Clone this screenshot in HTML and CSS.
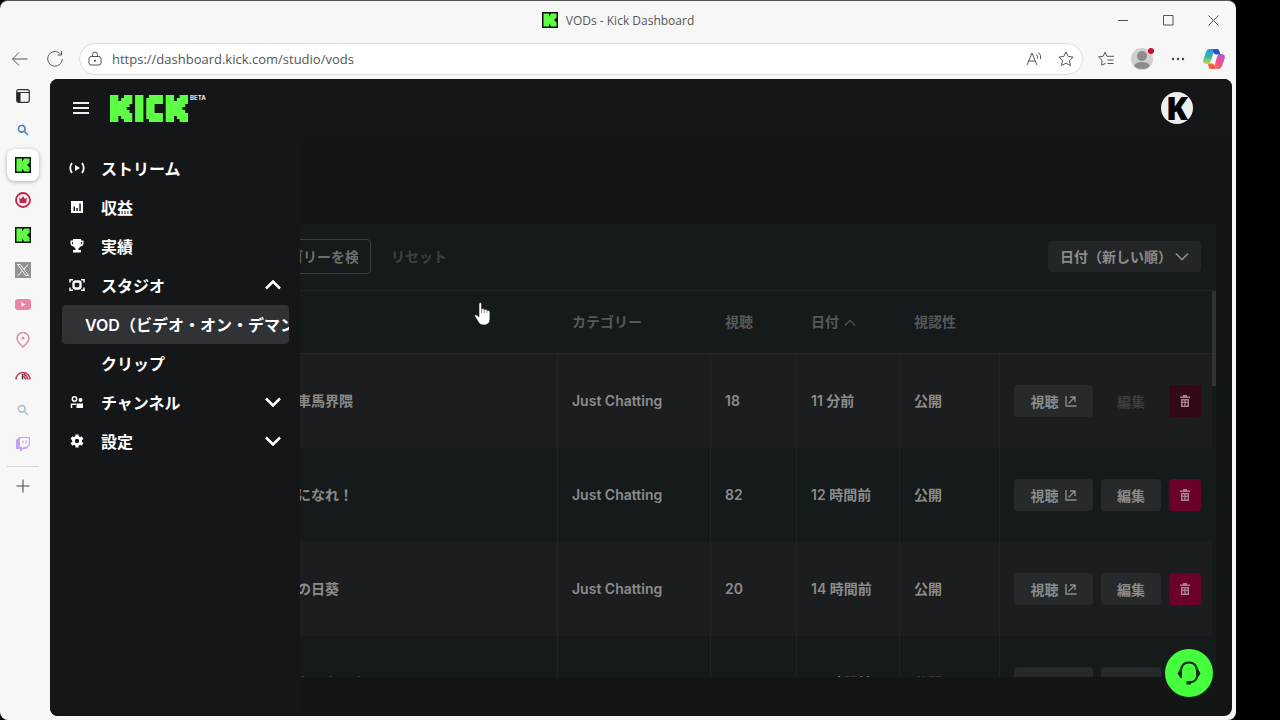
FILE: index.html
```html
<!DOCTYPE html>
<html lang="ja">
<head>
  <meta charset="utf-8">
  <meta name="viewport" content="width=device-width, initial-scale=1">
  <title>VODs - Kick Dashboard</title>
  <link rel="stylesheet" href="styles.css">
</head>
<body>
  <svg class="defs" width="0" height="0" aria-hidden="true">
    <symbol id="kick-k" viewBox="0 0 16 16">
      <path fill="#0b160a" d="M0 0h16v16H0z"/>
      <path fill="#5dff45" d="M1.500 1.500h5.500V4h1V2.500h1v-1h5.500V6h-1v1h-1v2h1v1h1v4.500H9v-1H8V12H7v2.500H1.500z"/>
    </symbol>
    <symbol id="magnifier" viewBox="0 0 12 12">
      <path fill="none" stroke="currentColor" stroke-width="1.600" d="M8 4.800a3.300 3.300 0 1 1-6.600 0 3.300 3.300 0 0 1 6.600 0M7.300 7.300 11 11"/>
    </symbol>
    <symbol id="chevron" viewBox="0 0 16 10">
      <path fill="none" stroke="currentColor" stroke-width="2.500" d="m1 1.500 7 7 7-7"/>
    </symbol>
    <symbol id="chevron-thin" viewBox="0 0 16 10">
      <path fill="none" stroke="currentColor" stroke-width="1.800" d="m1 1.500 7 7 7-7"/>
    </symbol>
    <symbol id="open-link" viewBox="0 0 12 12">
      <path fill="none" stroke="currentColor" stroke-width="1.400" d="M1 1v10h10.500M3.500 8.500l6-6M5 2h5v5"/>
    </symbol>
    <symbol id="trash" viewBox="0 0 10 12">
      <path fill="currentColor" d="M3 0h4v1.500h3V3H0V1.500h3zM1 4h8v8H1zm1.500 1.500v1.200h1.800V5.500zm3.200 0v1.200h1.800V5.500zM2.500 8v2.600h1.800V8zm3.200 0v2.600h1.800V8z" fill-rule="evenodd"/>
    </symbol>
  </svg>

  <div class="window">
    <header class="titlebar">
      <div class="window-title">
        <svg width="16" height="16"><use href="#kick-k"/></svg>
        <span>VODs - Kick Dashboard</span>
      </div>
      <div class="window-controls">
        <button aria-label="最小化"><svg width="11" height="11" viewBox="0 0 11 11"><path d="M0 5.500h10"/></svg></button>
        <button aria-label="最大化"><svg width="11" height="11" viewBox="0 0 11 11"><path d="M.5.500h9.500V10H.500z"/></svg></button>
        <button aria-label="閉じる"><svg width="11" height="11" viewBox="0 0 11 11"><path d="m.5.500 10 10m0-10-10 10"/></svg></button>
      </div>
    </header>

    <div class="toolbar">
      <button class="tool" aria-label="戻る"><svg width="18" height="16" viewBox="0 0 18 16"><path d="M8 1.500 1.500 8 8 14.500M1.500 8H16.500"/></svg></button>
      <button class="tool" aria-label="更新"><svg width="18" height="18" viewBox="0 0 18 18"><path d="M15 4.700A7.300 7.300 0 1 0 16.300 9M15.500 1v4h-4"/></svg></button>
      <div class="address">
        <svg width="14" height="16" viewBox="0 0 14 16"><path d="M3 5.500h8q2 0 2 2V12q0 2-2 2H3q-2 0-2-2V7.500q0-2 2-2M4.500 5.500V3.500a2.500 2.500 0 0 1 5 0v2"/><circle class="dot" cx="7" cy="9.700" r="1"/></svg>
        <input type="text" aria-label="アドレス" value="https://dashboard.kick.com/studio/vods">
        <button class="tool" aria-label="音声で読み上げる"><svg width="16" height="16" viewBox="0 0 16 16"><path d="m1 14 5-12 5 12M2.700 10h6.600M10.500 3.500q1.500 1.500 1 4M12.500 1.500q3 2.500 2 6.500"/></svg></button>
        <button class="tool" aria-label="お気に入りに追加"><svg width="16" height="16" viewBox="0 0 16 16"><path d="m8 .9 2.200 4.500 4.900.7-3.500 3.500.8 4.900L8 12.200l-4.400 2.300.8-4.900L.900 6.100l4.900-.7z"/></svg></button>
      </div>
      <div class="tools">
        <button class="tool" aria-label="お気に入り"><svg width="18" height="16" viewBox="0 0 18 16"><path d="M4.500 14.200 5.200 9.500 1.500 6l4.700-.7L8 1.200l2 4.100h7M5 14.200l3.500-2M10.500 9h6M10.500 12.500h6"/></svg></button>
        <button class="tool profile" aria-label="プロファイル">
          <svg class="filled" width="22" height="22" viewBox="0 0 22 22"><circle cx="11" cy="11" r="11" fill="#cfcfcf"/><circle cx="11" cy="8" r="5" fill="#8c8c8c"/><ellipse cx="11" cy="17.500" rx="7.500" ry="3.500" fill="#8c8c8c"/></svg>
          <span class="alert-dot"></span>
        </button>
        <button class="tool" aria-label="設定など"><svg width="14" height="4" viewBox="0 0 14 4"><g class="dot"><circle cx="2" cy="2" r="1.200"/><circle cx="7" cy="2" r="1.200"/><circle cx="12" cy="2" r="1.200"/></g></svg></button>
        <button class="tool" aria-label="Copilot">
          <svg class="filled" width="22" height="20" viewBox="0 0 22 20">
            <defs>
              <linearGradient id="cop-a" x1="0" y1="0" x2="0" y2="1"><stop offset="0" stop-color="#2f8fe6"/><stop offset=".5" stop-color="#35b8a8"/><stop offset="1" stop-color="#d7d53a"/></linearGradient>
              <linearGradient id="cop-b" x1="1" y1="0" x2="0" y2="1"><stop offset="0" stop-color="#a65be8"/><stop offset=".5" stop-color="#ee4f8c"/><stop offset="1" stop-color="#f59a3c"/></linearGradient>
            </defs>
            <path fill="url(#cop-a)" d="M6 0h8q-3 1-4 5l-2 7q-1 3-3 3H3q-4-1-2.500-5L3 3q1-3 3-3"/>
            <path fill="#2350c8" d="M10 0h4q2 0 3 4l.500 1.500H13Q10 5 10 0"/>
            <path fill="url(#cop-b)" d="M16 20H8q3-1 4-5l2-7q1-3 3-3h2q4 1 2.500 5L19 17q-1 3-3 3"/>
            <path fill="#f0603c" d="M12 20H8q-2 0-2.500-3L5 14.500h4.500q2.500 1 2.500 5.500"/>
          </svg>
        </button>
      </div>
    </div>

    <div class="browser-body">
      <nav class="tab-strip" aria-label="タブ">
        <a class="tab-actions" href="#" aria-label="タブ操作"><svg width="14" height="14" viewBox="0 0 14 14"><rect x=".7" y=".7" width="12.600" height="12.600" rx="2" fill="none" stroke="#333" stroke-width="1.200"/><path fill="#222" d="M1 3h3.500v10H2q-1-.500-1-2z"/><path stroke="#333" d="M1 3.500h12"/></svg></a>
        <a class="search-blue" href="#" aria-label="検索"><svg width="12" height="12"><use href="#magnifier"/></svg></a>
        <a class="current" href="#" aria-label="Kick"><svg width="16" height="16"><use href="#kick-k"/></svg></a>
        <a href="#" aria-label="クラウン"><svg width="16" height="16" viewBox="0 0 16 16"><circle cx="8" cy="8" r="7" fill="none" stroke="#c8234a" stroke-width="1.800"/><path fill="#c8234a" d="m4 5.500 2 1.500 2-3 2 3 2-1.500-.8 5.500H4.800z"/></svg></a>
        <a href="#" aria-label="Kick"><svg width="16" height="16"><use href="#kick-k"/></svg></a>
        <a href="#" aria-label="X"><svg width="16" height="16" viewBox="0 0 16 16"><path fill="#929292" d="M0 0h16v16H0z"/><path fill="none" stroke="#fff" d="M2.500 2.500h2.800l8.200 11h-2.800zM13 2.500 9 7M7 9.200l-4 4.300"/></svg></a>
        <a href="#" aria-label="YouTube"><svg width="16" height="12" viewBox="0 0 16 12"><rect width="16" height="11" rx="3" fill="#ea86a7"/><path fill="#fff" d="m6.500 3.500 4 2-4 2z"/></svg></a>
        <a href="#" aria-label="地図"><svg width="14" height="16" viewBox="0 0 14 16"><path fill="none" stroke="#d9909f" stroke-width="1.500" d="M7 15Q1 9.500 1 6.500a6 6 0 0 1 12 0Q13 9.500 7 15z"/><circle cx="7" cy="6" r="1.500" fill="#d9909f"/></svg></a>
        <a href="#" aria-label="速度計"><svg width="16" height="10" viewBox="0 0 16 10"><path fill="none" stroke="#c43a5a" stroke-width="1.500" d="M1 9.500a7 7 0 0 1 14 0M8.500 4q3.500 1.500 4.500 5.500M8.500 6l2.500 3.500"/><path stroke="#444" stroke-width="1.500" d="M7.500 4v5.500"/></svg></a>
        <a class="search-pale" href="#" aria-label="検索"><svg width="12" height="12"><use href="#magnifier"/></svg></a>
        <a href="#" aria-label="Twitch"><svg width="16" height="16" viewBox="0 0 16 16"><path fill="#c3a4f0" d="M4 0h11v8l-4 4H8l-3 3.500V12H1V3z"/><path fill="#fff" d="M5 1.300h8.700v6.200L11.500 9.700H9L7 11.500V9.700H5z"/><path stroke="#c3a4f0" stroke-width="1.300" d="M8 3.500v3M11 3.500v3"/></svg></a>
        <hr>
        <button aria-label="新しいタブ"><svg width="14" height="14" viewBox="0 0 14 14"><path stroke="#444" d="M7 .5v13M.5 7h13"/></svg></button>
      </nav>

      <div class="app">
        <header class="app-header">
          <button class="menu-button" aria-label="メニュー"><span></span><span></span><span></span></button>
          <a class="logo" href="#" aria-label="Kick">
            <svg width="78" height="27" viewBox="0 0 28 9" preserveAspectRatio="none">
              <path fill="#5dff45" d="M0 0h3v2h1V1h1V0h3v3H7v1H6v1h1v1h1v3H5V8H4V7H3v2H0zM9 0h3v9H9zM14 0h5v3h-3v3h3v3h-5V8h-1V1h1zM20 0h3v2h1V1h1V0h3v3h-1v1h-1v1h1v1h1v3h-3V8h-1V7h-1v2h-3z"/>
            </svg>
            <span>BETA</span>
          </a>
          <button class="avatar" aria-label="アカウント">K</button>
        </header>

        <nav class="drawer">
          <a href="#">
            <svg width="16" height="12" viewBox="0 0 16 12"><path fill="none" stroke="currentColor" stroke-width="1.800" d="M3 1Q-.5 6 3 11M13 1q3.500 5 0 10"/><path fill="currentColor" d="m6 3 5 3-5 3z"/></svg>
            <span>ストリーム</span>
          </a>
          <a href="#">
            <svg width="16" height="12" viewBox="0 0 16 12"><path fill="currentColor" fill-rule="evenodd" d="M2 0h12v12H2zm2.500 5.500V10H6V5.500zM7.300 7v3h1.500V7zM10.300 2.500V10h1.500V2.500z"/></svg>
            <span>収益</span>
          </a>
          <a href="#">
            <svg width="16" height="14" viewBox="0 0 16 14"><path fill="currentColor" fill-rule="evenodd" d="M4 0h8v1.500h2.500V4q0 3-3 3.500L9.500 9.500V11H12v2.500H4V11h2.500V9.500l-2-2q-3-.5-3-3.500V1.500H4zM2.800 3q0 2 1.200 2.700V3zm9.200 0v2.700q1.200-.700 1.200-2.700z"/></svg>
            <span>実績</span>
          </a>
          <a href="#">
            <svg width="16" height="12" viewBox="0 0 16 12"><path fill="none" stroke="currentColor" stroke-width="1.500" d="M1 3.500V.800h3M12 .800h3v2.700M1 8.500v2.700h3M12 11.200h3V8.500"/><rect x="4.500" y="2.500" width="7" height="7" rx="2" fill="none" stroke="currentColor" stroke-width="2.400"/></svg>
            <span>スタジオ</span>
            <svg class="arrow up" width="16" height="10"><use href="#chevron"/></svg>
          </a>
          <a class="sub selected" href="#"><span>VOD（ビデオ・オン・デマンド）</span></a>
          <a class="sub" href="#"><span>クリップ</span></a>
          <a href="#">
            <svg width="16" height="12" viewBox="0 0 16 12"><circle cx="5.500" cy="3" r="2.200" fill="none" stroke="currentColor" stroke-width="1.500"/><path fill="none" stroke="currentColor" stroke-width="1.500" d="M2.500 12V8.200H7"/><circle cx="11.500" cy="4" r="2" fill="currentColor"/><path fill="currentColor" d="M7.500 7.500H14V12H7.500z"/></svg>
            <span>チャンネル</span>
            <svg class="arrow" width="16" height="10"><use href="#chevron"/></svg>
          </a>
          <a href="#">
            <svg width="16" height="14" viewBox="0 0 16 14"><circle cx="8" cy="7" r="3.500" fill="none" stroke="currentColor" stroke-width="3"/><path stroke="currentColor" stroke-width="3.200" d="M8 .500v3M8 10.500v3M2.400 3.700 5 5.300M11 8.700l2.600 1.600M13.600 3.700 11 5.300M5 8.700l-2.600 1.600"/><circle cx="8" cy="7" r="2" fill="#141617"/></svg>
            <span>設定</span>
            <svg class="arrow" width="16" height="10"><use href="#chevron"/></svg>
          </a>
        </nav>

        <main class="panel">
          <div class="filters">
            <input class="title-search" type="text" aria-label="タイトル">
            <input class="category-search" type="text" aria-label="カテゴリー" placeholder="カテゴリーを検索">
            <button class="reset">リセット</button>
            <div class="sort">
              <select aria-label="並べ替え"><option>日付（新しい順）</option></select>
              <svg width="14" height="9"><use href="#chevron-thin"/></svg>
            </div>
          </div>

          <div class="table-area">
            <table>
              <colgroup>
                <col class="col-thumb"><col><col class="col-category"><col class="col-views"><col class="col-date"><col class="col-visibility"><col class="col-actions">
              </colgroup>
              <thead>
                <tr>
                  <th></th><th></th><th>カテゴリー</th><th>視聴</th>
                  <th>日付 <svg class="up" width="12" height="8"><use href="#chevron-thin"/></svg></th>
                  <th>視認性</th><th></th>
                </tr>
              </thead>
              <tbody>
                <tr>
                  <td></td><td>車馬界隈</td><td>Just Chatting</td><td>18</td><td>11 分前</td><td>公開</td>
                  <td><div class="actions">
                    <button class="watch">視聴 <svg width="12" height="12"><use href="#open-link"/></svg></button>
                    <button class="edit" disabled>編集</button>
                    <button class="delete" aria-label="削除" disabled><svg width="10" height="12"><use href="#trash"/></svg></button>
                  </div></td>
                </tr>
                <tr>
                  <td></td><td>になれ！</td><td>Just Chatting</td><td>82</td><td>12 時間前</td><td>公開</td>
                  <td><div class="actions">
                    <button class="watch">視聴 <svg width="12" height="12"><use href="#open-link"/></svg></button>
                    <button class="edit">編集</button>
                    <button class="delete" aria-label="削除"><svg width="10" height="12"><use href="#trash"/></svg></button>
                  </div></td>
                </tr>
                <tr>
                  <td></td><td>の日葵</td><td>Just Chatting</td><td>20</td><td>14 時間前</td><td>公開</td>
                  <td><div class="actions">
                    <button class="watch">視聴 <svg width="12" height="12"><use href="#open-link"/></svg></button>
                    <button class="edit">編集</button>
                    <button class="delete" aria-label="削除"><svg width="10" height="12"><use href="#trash"/></svg></button>
                  </div></td>
                </tr>
                <tr>
                  <td></td><td>なになった</td><td>Just Chatting</td><td>20</td><td>16 時間前</td><td>公開</td>
                  <td><div class="actions">
                    <button class="watch">視聴 <svg width="12" height="12"><use href="#open-link"/></svg></button>
                    <button class="edit">編集</button>
                    <button class="delete" aria-label="削除"><svg width="10" height="12"><use href="#trash"/></svg></button>
                  </div></td>
                </tr>
              </tbody>
            </table>
            <div class="scrollbar"><div class="thumb"></div></div>
          </div>
        </main>

        <button class="support" aria-label="サポート">
          <svg width="24" height="24" viewBox="0 0 24 24"><path fill="none" stroke="#0c2a0c" stroke-width="2" d="M4 11V9.500Q4.500 1.500 12 1.500T20 9.500V15q0 6-8 6.500"/><path fill="#0c2a0c" d="M5 8v9H3.500L.500 12.500 3 8zM19 8v9h1.500l3-4.500L21 8zM9.500 20H14v3.500H9.500z"/></svg>
        </button>
      </div>
    </div>
  </div>

  <svg class="pointer" width="17" height="24" viewBox="0 0 17 24" aria-hidden="true">
    <path fill="#fff" stroke="#222" stroke-width=".6" d="M5 2q0-1.500 1.200-1.500T7.500 2v5q2-1 2.700.500 2-.8 2.700.800 3-.5 3 2V17q0 6-6.500 6-3.500 0-5-3L1 14.500q-.7-1.500.5-1.700T5 15z"/>
    <path stroke="#555" stroke-width=".6" d="M7.500 7v4M10.200 7.500V11M12.900 8.500V11"/>
  </svg>
</body>
</html>
```
FILE: styles.css
```css
* {
  box-sizing: border-box;
}
body {
  margin: 0;
  height: 100vh;
  padding-right: 44px;
  overflow: hidden;
  background: #000;
  font-family: Inter, "Noto Sans CJK JP", sans-serif;
  font-size: 14px;
}
button {
  display: flex;
  align-items: center;
  justify-content: center;
  padding: 0;
  border: 0;
  background: none;
  color: inherit;
  font: inherit;
}
svg {
  flex: none;
}
.defs {
  position: absolute;
}

/* browser window */
.window {
  display: flex;
  flex-direction: column;
  height: 100%;
  border-top: 1px solid #5a5658;
  border-radius: 8px;
  background: #f7f7f7;
  overflow: hidden;
  color: #555;
  font-family: "Open Sans", sans-serif;
}
.titlebar {
  display: grid;
  grid-template-columns: 1fr auto 1fr;
  align-items: center;
  height: 38px;
  flex: none;
}
.window-title {
  grid-column: 2;
  display: flex;
  align-items: center;
  gap: 8px;
  font-size: 12px;
}
.window-controls {
  display: flex;
  justify-content: flex-end;
}
.window-controls button {
  width: 45px;
}
.window-controls path,
.toolbar path {
  fill: none;
  stroke: #555;
}
.toolbar {
  display: flex;
  align-items: center;
  height: 40px;
  flex: none;
  padding: 0 5px 0 2px;
}
.toolbar .filled path {
  stroke: none;
  fill: revert-layer;
}
.dot {
  fill: #444;
}
.tool {
  width: 35px;
  height: 30px;
}
.address {
  display: flex;
  align-items: center;
  flex: 1;
  height: 32px;
  margin-left: 7px;
  padding: 0 0 0 8px;
  border: 1px solid #dcdcdc;
  border-radius: 16px;
  background: #fff;
}
.address input {
  flex: 1;
  min-width: 0;
  padding: 0 0 0 10px;
  border: 0;
  outline: 0;
  background: none;
  color: #555;
  font-family: inherit;
  font-size: 13px;
}
.address .tool {
  width: 32px;
}
.tools {
  display: flex;
  gap: 1px;
  margin-left: 5px;
}
.profile {
  position: relative;
}
.alert-dot {
  position: absolute;
  top: 4px;
  right: 5px;
  width: 6px;
  height: 6px;
  border-radius: 50%;
  background: #c8102e;
}
.browser-body {
  display: flex;
  flex: 1;
  min-height: 0;
  padding: 0 4px 4px 0;
}
.tab-strip {
  display: flex;
  flex-direction: column;
  align-items: center;
  width: 50px;
  padding-right: 4px;
  flex: none;
}
.tab-strip a {
  display: flex;
  align-items: center;
  justify-content: center;
  width: 32px;
  height: 35px;
  border-radius: 8px;
}
.tab-strip .tab-actions {
  height: 33px;
}
.tab-strip .current {
  height: 32px;
  margin: 2px 0 1px;
  background: #fff;
  box-shadow: 0 1px 4px rgba(0, 0, 0, .3);
}
.tab-strip hr {
  width: 32px;
  margin: 4px 0 12px;
  border: 0;
  border-top: 1px solid #d4d4d4;
}
.search-blue {
  color: #4a7fb8;
}
.search-pale {
  color: #a9bfd0;
}

/* dashboard */
.app {
  position: relative;
  display: flex;
  flex-direction: column;
  flex: 1;
  min-width: 0;
  border-radius: 8px;
  background: #141615;
  overflow: hidden;
  color: #8a8c8c;
  font-family: Inter, "Noto Sans CJK JP", sans-serif;
  font-weight: 600;
}
.app-header {
  display: flex;
  align-items: center;
  height: 58px;
  flex: none;
  padding: 0 39px 0 23px;
  background: #141617;
}
.menu-button {
  flex-direction: column;
  gap: 3px;
  width: 16px;
}
.menu-button span {
  width: 16px;
  height: 2px;
  background: #eee;
}
.logo {
  display: flex;
  margin-left: 21px;
  color: #ddd;
  text-decoration: none;
}
.logo span {
  margin-left: 2px;
  font-size: 6px;
  font-weight: 800;
  line-height: 6px;
}
.avatar {
  width: 32px;
  height: 32px;
  margin-left: auto;
  border-radius: 50%;
  background: #eee;
  color: #000;
  font-family: "Noto Sans", sans-serif;
  font-size: 32px;
  font-weight: 900;
  line-height: 32px;
}
.drawer {
  position: absolute;
  top: 58px;
  bottom: 0;
  left: 0;
  z-index: 1;
  width: 250px;
  padding: 12px 11px 0 12px;
  background: #141617;
}
.drawer a {
  display: flex;
  align-items: center;
  height: 39px;
  padding: 0 8px 2px 7px;
  border-radius: 4px;
  overflow: hidden;
  color: #fff;
  font-size: 16px;
  font-weight: 700;
  text-decoration: none;
  white-space: nowrap;
}
.drawer span {
  margin-left: 16px;
}
.drawer .sub {
  padding-left: 23px;
}
.drawer .selected {
  padding-left: 7px;
  background: #303236;
  font-weight: 600;
}
.arrow {
  margin-left: auto;
}
.up {
  transform: rotate(180deg);
}
.panel {
  display: flex;
  flex-direction: column;
  flex: 1;
  min-height: 0;
  margin: 87px 16px 39px;
  background: #151a1a;
}
.filters {
  display: flex;
  align-items: center;
  height: 67px;
  flex: none;
  padding: 0 15px 2px 16px;
  border-bottom: 1px solid #1f2525;
}
.filters input {
  height: 35px;
  margin-right: 8px;
  padding: 0 12px;
  border: 1px solid #3c3e3f;
  border-radius: 4px;
  background: none;
  color: #777;
  font: inherit;
}
.filters input::placeholder {
  color: #6c6e6f;
}
.title-search {
  width: 158px;
}
.category-search {
  width: 123px;
}
.reset {
  padding: 0 12px;
  color: #3e4142;
}
.sort {
  position: relative;
  margin-left: auto;
}
.sort select {
  width: 153px;
  height: 31px;
  padding: 0 12px;
  border: 0;
  border-radius: 4px;
  appearance: none;
  background: #232627;
  color: #8a8c8c;
  font: inherit;
}
.sort svg {
  position: absolute;
  top: 11px;
  right: 12px;
  pointer-events: none;
}
.table-area {
  display: flex;
  align-items: flex-start;
  flex: 1;
  min-height: 0;
  overflow: hidden;
}
table {
  flex: 1;
  min-width: 0;
  table-layout: fixed;
  border-collapse: separate;
  border-spacing: 0;
}
.col-thumb { width: 215px; }
.col-category { width: 153px; }
.col-views { width: 86px; }
.col-date { width: 103px; }
.col-visibility { width: 100px; }
.col-actions { width: 213px; }
th {
  height: 63px;
  padding: 0 15px 3px;
  border-bottom: 1px solid #252829;
  color: #55595a;
  font-weight: 600;
  text-align: left;
  white-space: nowrap;
}
th svg {
  margin-left: 1px;
}
td {
  height: 94px;
  padding: 0 0 2px 14px;
  border-left: 1px solid #202425;
  white-space: nowrap;
}
td:nth-child(-n+2) {
  padding-left: 16px;
  border-left: 0;
}
td:last-child {
  padding-bottom: 0;
}
tbody tr:nth-child(odd) {
  background: #1c1d1f;
}
.actions {
  display: flex;
  gap: 8px;
}
.actions button {
  height: 32px;
  border-radius: 4px;
  background: #262a2b;
}
.actions .watch {
  gap: 6px;
  width: 79px;
}
.actions .edit {
  width: 60px;
}
.actions .edit:disabled {
  background: none;
  color: #3c3e40;
}
.actions .delete {
  width: 32px;
  background: #6b002b;
  color: #a58290;
}
.actions .delete:disabled {
  background: #330818;
}
.scrollbar {
  width: 4px;
}
.thumb {
  height: 95px;
  background: #303435;
}
.support {
  position: absolute;
  right: 19px;
  bottom: 19px;
  z-index: 2;
  width: 48px;
  height: 48px;
  border-radius: 50%;
  background: #45ff3c;
}
.pointer {
  position: absolute;
  top: 302px;
  left: 474px;
  z-index: 3;
}
```
